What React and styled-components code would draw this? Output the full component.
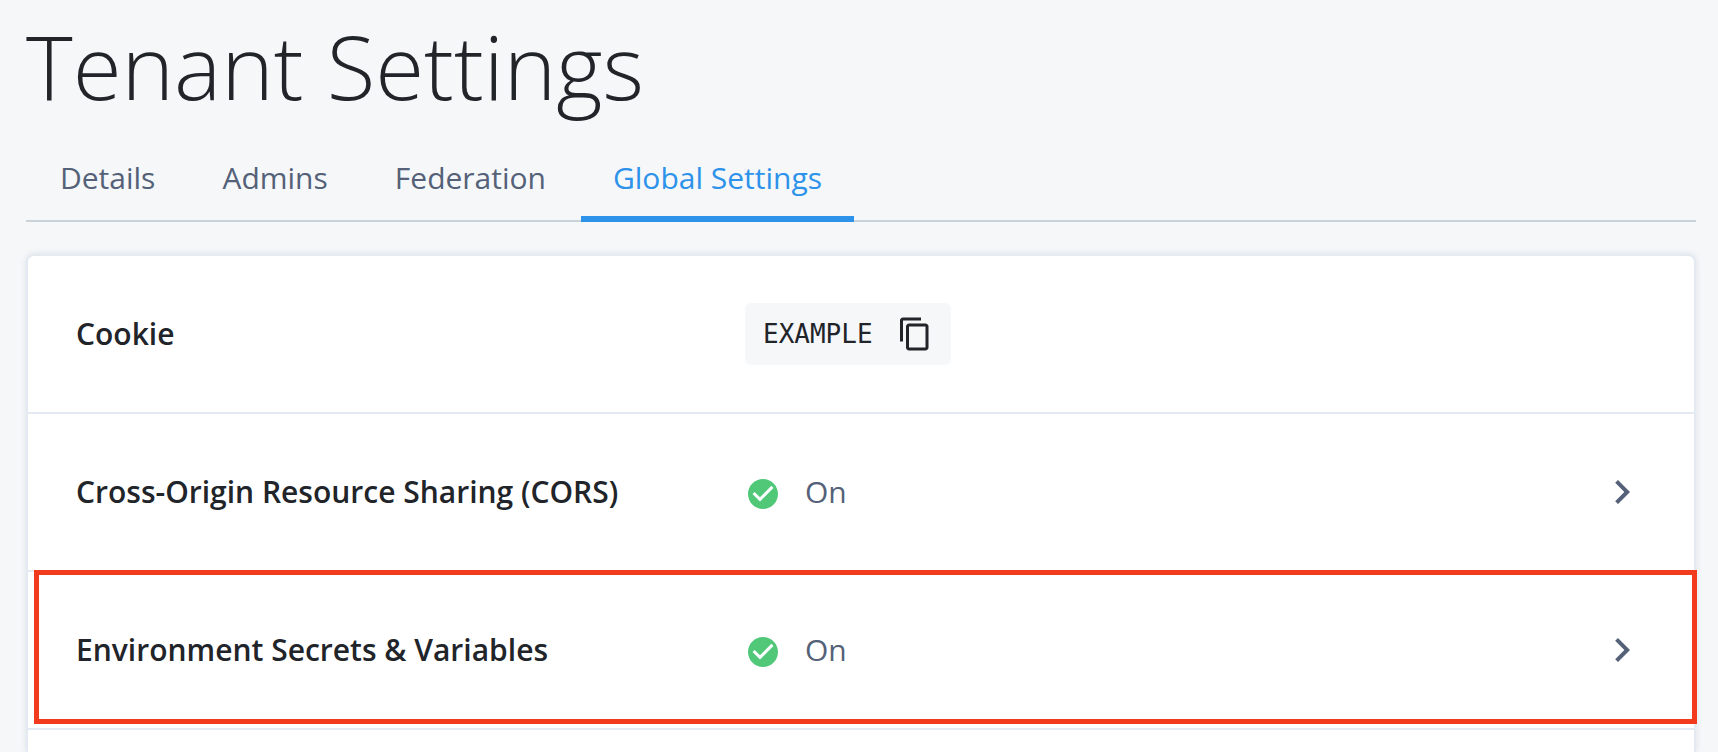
import React, { useState } from "react";
import styled, { createGlobalStyle, css } from "styled-components";

const color = {
  page: "#f5f7f9",
  ink: "#212429",
  muted: "#546178",
  accent: "#2d92e9",
  line: "#cbd3da",
  cardLine: "#e3eaf1",
  green: "#50c878",
  red: "#f23a1d",
};

const GlobalStyle = createGlobalStyle`
  *, *::before, *::after { box-sizing: border-box; }
  body {
    margin: 0;
    background: ${color.page};
    color: ${color.ink};
    font-family: "Open Sans", "Noto Sans", sans-serif;
    font-size: 30px;
    line-height: 40px;
  }
`;

const Page = styled.main`
  display: flex;
  flex-direction: column;
  min-height: 100vh;
  padding: 0 22px 0 26px;
`;

const Title = styled.h1`
  margin: 0;
  padding: 6px 0 4px;
  font-size: 89px;
  font-weight: 300;
  line-height: 120px;
`;

const Tabs = styled.nav`
  display: flex;
  gap: 3px;
  height: 92px;
  padding-left: 2px;
  border-bottom: 2px solid ${color.line};
`;

const Tab = styled.a`
  height: 92px;
  padding: 28px 32px 0;
  border-bottom: 6px solid transparent;
  color: ${color.muted};
  text-decoration: none;
  white-space: nowrap;

  ${(p) =>
    p.$active &&
    css`
      color: ${color.accent};
      border-bottom-color: ${color.accent};
    `}
`;

const Card = styled.section`
  flex: 1;
  margin-top: 32px;
  background: #fff;
  border: 2px solid ${color.cardLine};
  border-bottom: 0;
  border-radius: 8px 8px 0 0;
  box-shadow: 0 0 6px rgba(84, 97, 120, 0.14);
`;

const Row = styled.div`
  position: relative;
  display: grid;
  grid-template-columns: 40fr 51fr 48px;
  align-items: center;
  min-height: 158px;
  padding: 0 48px;
  border-bottom: 2px solid ${color.cardLine};

  ${(p) =>
    p.$highlighted &&
    css`
      &::after {
        content: "";
        position: absolute;
        inset: -2px -3px 4px 6px;
        border: 5px solid ${color.red};
        pointer-events: none;
      }
    `}
`;

const Label = styled.h2`
  margin: 0;
  font-size: 30px;
  font-weight: 600;
  line-height: 40px;
`;

const Chip = styled.div`
  display: flex;
  justify-self: start;
  align-items: center;
  gap: 24px;
  height: 62px;
  padding: 0 18px;
  border-radius: 6px;
  background: ${color.page};
`;

const Code = styled.code`
  font-family: "DejaVu Sans Mono", monospace;
  font-size: 26px;
  line-height: 32px;
`;

const IconButton = styled.button`
  display: flex;
  padding: 0;
  border: 0;
  background: none;
  color: inherit;
  cursor: pointer;
`;

const Status = styled.div`
  display: flex;
  align-items: flex-end;
  gap: 24px;
  color: ${color.muted};
`;

const Icon = styled.svg`
  display: block;
  width: ${(p) => p.$size}px;
  height: ${(p) => p.$size}px;
  fill: ${(p) => p.$fill || "currentColor"};
`;

const CopyIcon = () => (
  <Icon $size={36} viewBox="0 0 24 24" aria-hidden="true">
    <path d="M16 1H4c-1.1 0-2 .9-2 2v14h2V3h12V1zm3 4H8c-1.1 0-2 .9-2 2v14c0 1.1.9 2 2 2h11c1.1 0 2-.9 2-2V7c0-1.100-.9-2-2-2zm0 16H8V7h11v14z" />
  </Icon>
);

const CheckIcon = () => (
  <Icon $size={36} $fill={color.green} viewBox="0 0 24 24" aria-hidden="true">
    <path d="M12 2C6.480 2 2 6.480 2 12s4.480 10 10 10 10-4.480 10-10S17.520 2 12 2zm-2 15l-5-5 1.410-1.410L10 14.170l7.590-7.590L19 8l-9 9z" />
  </Icon>
);

const ChevronIcon = () => (
  <Icon $size={48} $fill={color.muted} viewBox="0 0 24 24" aria-hidden="true">
    <path d="M8.590 16.590 13.170 12 8.590 7.410 10 6l6 6-6 6z" />
  </Icon>
);

const tabs = ["Details", "Admins", "Federation", "Global Settings"];

const settings = [
  { name: "Cross-Origin Resource Sharing (CORS)" },
  { name: "Environment Secrets & Variables", highlighted: true },
];

export default function App() {
  const [active, setActive] = useState("Global Settings");
  return (
    <>
      <GlobalStyle />
      <Page>
        <Title>Tenant Settings</Title>
        <Tabs>
          {tabs.map((tab) => (
            <Tab
              key={tab}
              href="#"
              $active={tab === active}
              aria-current={tab === active ? "page" : undefined}
              onClick={(e) => {
                e.preventDefault();
                setActive(tab);
              }}
            >
              {tab}
            </Tab>
          ))}
        </Tabs>
        <Card>
          <Row>
            <Label>Cookie</Label>
            <Chip>
              <Code>EXAMPLE</Code>
              <IconButton type="button" aria-label="Copy cookie">
                <CopyIcon />
              </IconButton>
            </Chip>
          </Row>
          {settings.map((s) => (
            <Row key={s.name} $highlighted={s.highlighted}>
              <Label>{s.name}</Label>
              <Status>
                <CheckIcon />
                On
              </Status>
              <IconButton type="button" aria-label={`Open ${s.name}`}>
                <ChevronIcon />
              </IconButton>
            </Row>
          ))}
        </Card>
      </Page>
    </>
  );
}
